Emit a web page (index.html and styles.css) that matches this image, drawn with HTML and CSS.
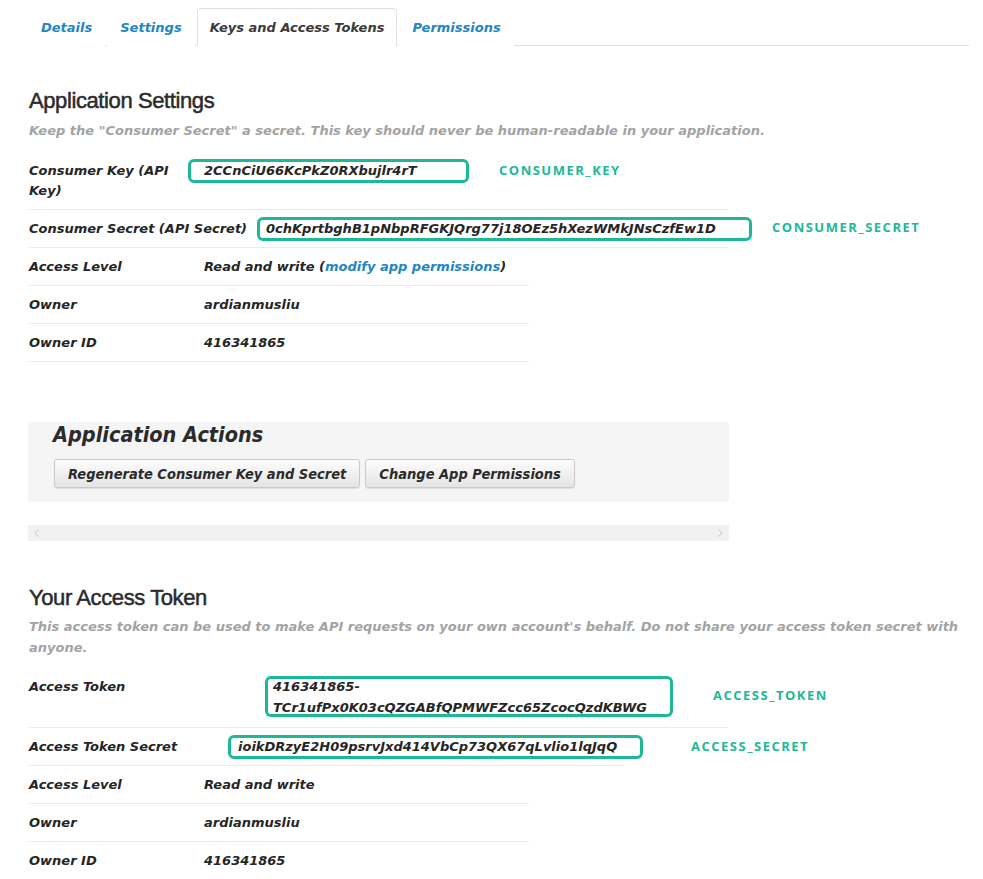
FILE: index.html
```html
<!DOCTYPE html>
<html>
<head>
<meta charset="utf-8">
<link rel="stylesheet" href="styles.css">
</head>
<body>
<div class="page">
  <ul class="tabs">
    <li><a class="tab">Details</a></li>
    <li><a class="tab">Settings</a></li>
    <li><a class="tab tab-active">Keys and Access Tokens</a></li>
    <li><a class="tab">Permissions</a></li>
  </ul>

  <section class="sec sec-app">
    <h2 class="sec-title">Application Settings</h2>
    <p class="sec-note">Keep the "Consumer Secret" a secret. This key should never be human-readable in your application.</p>
    <div class="rows">
      <div class="row row-wide">
        <div class="lbl">Consumer Key (API Key)</div>
        <div class="val"><span class="hl hl-ck">2CCnCiU66KcPkZ0RXbujlr4rT</span></div>
        <div class="note note-ck">CONSUMER_KEY</div>
      </div>
      <div class="row row-wide">
        <div class="lbl lbl-cs">Consumer Secret (API Secret)</div>
        <div class="val"><span class="hl hl-cs">0chKprtbghB1pNbpRFGKJQrg77j18OEz5hXezWMkJNsCzfEw1D</span></div>
        <div class="note note-cs">CONSUMER_SECRET</div>
      </div>
      <div class="row">
        <div class="lbl">Access Level</div>
        <div class="val">Read and write (<a class="link">modify app permissions</a>)</div>
      </div>
      <div class="row">
        <div class="lbl">Owner</div>
        <div class="val">ardianmusliu</div>
      </div>
      <div class="row">
        <div class="lbl">Owner ID</div>
        <div class="val">416341865</div>
      </div>
    </div>
  </section>

  <section class="actions">
    <h3 class="actions-title">Application Actions</h3>
    <div class="btns">
      <button class="btn">Regenerate Consumer Key and Secret</button>
      <button class="btn">Change App Permissions</button>
    </div>
  </section>

  <div class="hscroll">
    <svg class="arr" width="5" height="8" viewBox="0 0 5 8"><path d="M4.5 0.5 L1 4 L4.5 7.5" fill="none" stroke="#c4c4c4" stroke-width="1"/></svg>
    <svg class="arr" width="5" height="8" viewBox="0 0 5 8"><path d="M0.5 0.5 L4 4 L0.5 7.5" fill="none" stroke="#c4c4c4" stroke-width="1"/></svg>
  </div>

  <section class="sec sec-token">
    <h2 class="sec-title">Your Access Token</h2>
    <p class="sec-note sec-note-2">This access token can be used to make API requests on your own account's behalf. Do not share your access token secret with anyone.</p>
    <div class="rows">
      <div class="row row-wide">
        <div class="lbl lbl-at">Access Token</div>
        <div class="val"><span class="hl hl-at">416341865-<br>TCr1ufPx0K03cQZGABfQPMWFZcc65ZcocQzdKBWG</span></div>
        <div class="note note-at">ACCESS_TOKEN</div>
      </div>
      <div class="row row-mid">
        <div class="lbl lbl-as">Access Token Secret</div>
        <div class="val"><span class="hl hl-as">ioikDRzyE2H09psrvJxd414VbCp73QX67qLvlio1lqJqQ</span></div>
        <div class="note note-as">ACCESS_SECRET</div>
      </div>
      <div class="row">
        <div class="lbl">Access Level</div>
        <div class="val">Read and write</div>
      </div>
      <div class="row">
        <div class="lbl">Owner</div>
        <div class="val">ardianmusliu</div>
      </div>
      <div class="row">
        <div class="lbl">Owner ID</div>
        <div class="val">416341865</div>
      </div>
    </div>
  </section>
</div>
</body>
</html>
```
FILE: styles.css
```css
html, body {
  margin: 0;
  padding: 0;
  background: #fff;
}
body {
  font-family: "DejaVu Sans", "Liberation Sans", sans-serif;
  color: #292f33;
}
.page {
  padding: 8px 0 0 28px;
  width: 941px;
}

/* tabs */
.tabs {
  list-style: none;
  margin: 0;
  padding: 0;
  display: flex;
  height: 37px;
  border-bottom: 1px solid #e1e1e1;
}
.tabs li {
  margin-right: 2px;
}
.tab {
  display: block;
  padding: 1px 12px 0;
  line-height: 35px;
  border: 1px solid transparent;
  border-radius: 4px 4px 0 0;
  font-size: 13px;
  font-weight: bold;
  font-style: italic;
  color: #2186c4;
  background: #fff;
}
.tab-active {
  color: #3a3a3a;
  border-color: #e1e1e1;
  border-bottom-color: #fff;
}

/* sections */
.sec {
  padding-left: 1px;
}
.sec-title {
  margin: 0;
  font-family: "Liberation Sans", Arial, sans-serif;
  font-weight: normal;
  font-size: 22px;
  letter-spacing: -0.4px;
  line-height: 28px;
  color: #2b2b2b;
  -webkit-text-stroke: 0.5px currentColor;
}
.sec-app .sec-title {
  margin-top: 41px;
}
.sec-token .sec-title {
  margin-top: 43px;
}
.sec-note {
  margin: 6px 0 0;
  font-size: 13px;
  line-height: 20px;
  font-weight: bold;
  font-style: italic;
  color: #a3a3a3;
}
.sec-note-2 {
  margin-top: 4px;
  line-height: 21px;
}
.rows {
  margin-top: 11px;
}
.sec-token .rows {
  margin-top: 10px;
}
.row {
  display: flex;
  align-items: flex-start;
  width: 500px;
  padding: 9px 0 8px;
  border-bottom: 1px solid #ebebeb;
  font-size: 13px;
  line-height: 20px;
  font-weight: bold;
  font-style: italic;
  color: #262626;
}
.row-wide {
  width: 699px;
}
.row-mid {
  width: 595px;
}
.lbl {
  width: 150px;
  flex: 0 0 auto;
  margin-right: 25px;
}
.lbl-cs {
  width: 228px;
  margin-right: 0;
  white-space: nowrap;
}
.lbl-at {
  width: 236px;
  margin-right: 0;
}
.lbl-as {
  width: 199px;
  margin-right: 0;
}
.val {
  flex: 0 0 auto;
  white-space: nowrap;
}
.link {
  color: #2186c4;
}

/* highlight boxes */
.hl {
  display: block;
  box-sizing: border-box;
  border: 3px solid #1db896;
  border-radius: 6px;
  height: 24px;
  line-height: 18px;
  margin: -2px 0;
}
.hl-ck {
  width: 281px;
  margin-left: -16px;
  padding-left: 13px;
}
.hl-cs {
  width: 495px;
  padding-left: 6px;
}
.hl-at {
  width: 408px;
  height: 41px;
  border: 0;
  box-shadow: inset 0 0 0 3px #1db896;
  line-height: 21px;
  margin: -1px 0 2px;
  padding-left: 8px;
}
.hl-as {
  width: 415px;
  padding-left: 7px;
}
.note {
  flex: 0 0 auto;
  white-space: nowrap;
  font-family: "Open Sans", "Liberation Sans", sans-serif;
  font-style: normal;
  font-weight: 700;
  font-size: 13px;
  letter-spacing: 1.5px;
  color: #1db896;
}
.note-ck {
  margin-left: 30px;
  margin-top: -1px;
}
.note-cs {
  margin-left: 20px;
  margin-top: -2px;
}
.note-at {
  margin-left: 40px;
  margin-top: 8px;
}
.note-as {
  margin-left: 48px;
  margin-top: -1px;
}

/* actions */
.actions {
  margin-top: 60px;
  width: 676px;
  padding: 1px 0 14px 25px;
  background: #f5f5f5;
  border-radius: 4px;
}
.actions-title {
  margin: 0;
  font-family: "DejaVu Sans Condensed", "Liberation Sans", sans-serif;
  font-size: 21.5px;
  line-height: 24px;
  font-weight: bold;
  font-style: italic;
  color: #2b2b2b;
}
.btns {
  display: flex;
  gap: 5px;
  margin-top: 12px;
  padding-left: 1px;
}
.btn {
  height: 29px;
  padding: 0 13px;
  border: 1px solid #c9c9c9;
  border-radius: 3px;
  background: linear-gradient(#fdfdfd, #e4e4e4);
  box-shadow: 0 1px 1px rgba(0,0,0,0.08);
  font-family: "DejaVu Sans Condensed", "Liberation Sans", sans-serif;
  font-size: 14.5px;
  font-weight: bold;
  font-style: italic;
  color: #2b2b2b;
}

.hscroll {
  margin-top: 23px;
  width: 701px;
  height: 16px;
  background: #f1f1f1;
  display: flex;
  justify-content: space-between;
  align-items: center;
  padding: 0 6px;
  box-sizing: border-box;
}
.arr {
  display: block;
}
```
